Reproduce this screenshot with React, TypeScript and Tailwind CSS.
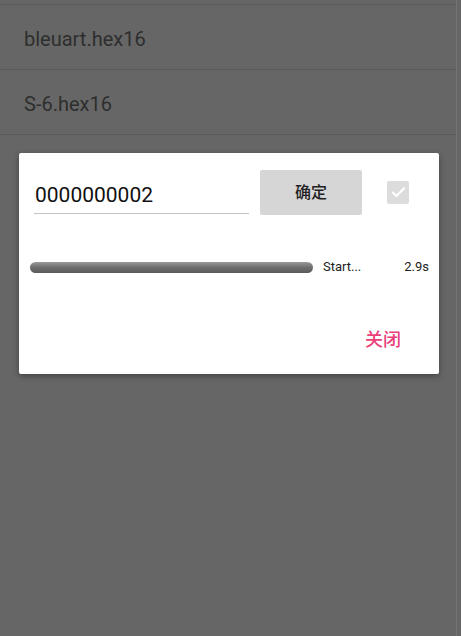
import { Check } from "lucide-react";

const files = ["bleuart.hex16", "S-6.hex16"];

export default function App() {
  return (
    <div
      className="relative h-[636px] w-[461px] overflow-hidden bg-[#666666]"
      style={{ fontFamily: "Roboto, 'Noto Sans CJK SC', sans-serif" }}
    >
      {/* dimmed list behind the dialog */}
      <div className="flex h-full w-[457px] flex-col border-r border-[#757575]">
        <div className="h-[5px] border-b border-[#5a5a5a]" />
        {files.map((f) => (
          <div key={f} className="flex h-[65px] items-center border-b border-[#5a5a5a] pl-6 pt-[3px] text-[20px] text-[#2e2e2e]">
            {f}
          </div>
        ))}
      </div>

      {/* dialog */}
      <div className="absolute left-[19px] top-[153px] flex h-[221px] w-[420px] flex-col rounded-[2px] bg-white shadow-[0_2px_6px_rgba(0,0,0,0.35)]">
        <div className="mt-[17px] flex h-[45px] items-center">
          <div className="ml-[15px] flex h-[45px] w-[215px] flex-col justify-end">
            <div className="pb-[7px] pl-[1px] text-[21px] leading-none text-[#111]">0000000002</div>
            <div className="mb-[1px] h-[1px] bg-[#c4c4c4]" />
          </div>
          <button className="ml-[11px] h-[45px] w-[102px] rounded-[2px] bg-[#d6d6d6] text-[16px] font-medium text-[#222]">确定</button>
          <div className="ml-[25px] flex h-[23px] w-[22px] items-center justify-center rounded-[2px] bg-[#dcdcdc]">
            <Check className="size-[17px] text-white" strokeWidth={3} />
          </div>
        </div>

        <div className="mt-[42px] flex h-5 items-center pr-[10px]">
          <div className="ml-[11px] h-[11px] w-[283px] rounded-full bg-gradient-to-b from-[#9a9a9a] via-[#6e6e6e] to-[#5a5a5a]" />
          <span className="ml-[10px] text-[13px] text-[#222]">Start...</span>
          <span className="ml-auto text-[13px] text-[#222]">2.9s</span>
        </div>

        <div className="mt-auto mb-[21px] flex justify-end pr-[38px]">
          <span className="text-[18px] font-medium text-[#e9407a]">关闭</span>
        </div>
      </div>
    </div>
  );
}
